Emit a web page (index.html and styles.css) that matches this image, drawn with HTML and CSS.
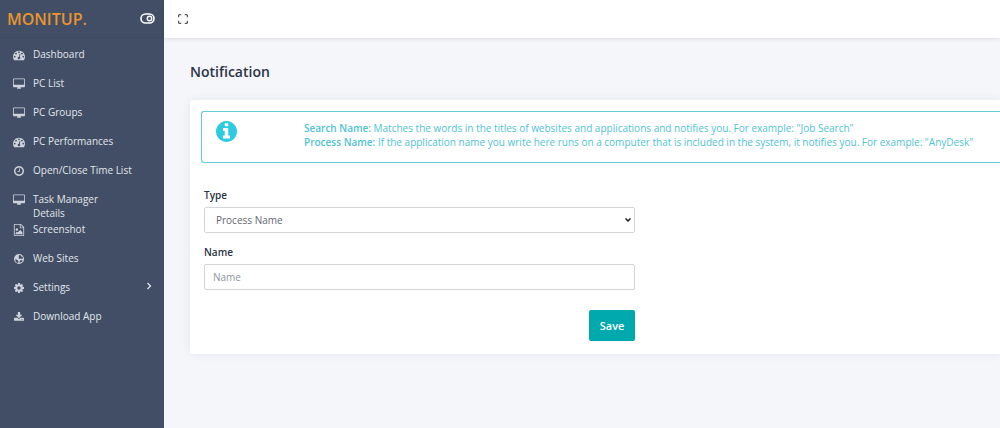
FILE: index.html
```
<!DOCTYPE html>
<html lang="en">
<head>
    <meta charset="UTF-8">
    <meta name="viewport" content="width=device-width, initial-scale=1.0">
    <title>Notification - MONITUP.</title>
    <link rel="stylesheet" href="styles.css">
</head>
<body>
    <!-- Shared icon shapes -->
    <svg class="sprite" aria-hidden="true">
        <symbol id="i-dash" viewBox="0 0 1792 1792"><path d="M384 1152q0-53-37.500-90.500t-90.500-37.500-90.500 37.500-37.500 90.500 37.500 90.500 90.500 37.500 90.500-37.500 37.500-90.500zm192-448q0-53-37.500-90.500t-90.500-37.500-90.500 37.500-37.500 90.500 37.500 90.500 90.500 37.500 90.500-37.500 37.500-90.500zm428 481l101-382q6-26-7.500-48.500t-38.500-29.500-48 6.500-30 39.500l-101 382q-60 5-107 43.500t-63 98.500q-20 77 20 146t117 89 146-20 89-117q16-60-6-117t-72-91zm660-33q0-53-37.500-90.500t-90.500-37.500-90.500 37.500-37.500 90.500 37.500 90.500 90.500 37.500 90.500-37.500 37.500-90.500zm-640-640q0-53-37.500-90.500t-90.500-37.500-90.500 37.500-37.500 90.500 37.500 90.500 90.500 37.500 90.500-37.500 37.500-90.500zm448 192q0-53-37.500-90.500t-90.500-37.500-90.500 37.500-37.500 90.500 37.500 90.500 90.500 37.500 90.500-37.500 37.500-90.500zm320 448q0 261-141 483-19 29-54 29h-1402q-35 0-54-29-141-221-141-483 0-182 71-348t191-286 286-191 348-71 348 71 286 191 191 286 71 348z"/></symbol>
        <symbol id="i-desktop" viewBox="0 0 1920 1792"><path d="M1792 992v-832q0-13-9.500-22.500t-22.500-9.500h-1600q-13 0-22.500 9.500t-9.500 22.500v832q0 13 9.500 22.500t22.500 9.500h1600q13 0 22.500-9.500t9.500-22.500zm128-832v1088q0 66-47 113t-113 47h-544q0 37 16 77.500t32 71 16 43.500q0 26-19 45t-45 19h-512q-26 0-45-19t-19-45q0-14 16-44t32-70 16-78h-544q-66 0-113-47t-47-113v-1088q0-66 47-113t113-47h1600q66 0 113 47t47 113z"/></symbol>
        <symbol id="i-clock" viewBox="128 128 1536 1536"><path d="M1024 544v448q0 14-9 23t-23 9h-320q-14 0-23-9t-9-23v-64q0-14 9-23t23-9h224v-352q0-14 9-23t23-9h64q14 0 23 9t9 23zm416 352q0-148-73-273t-198-198-273-73-273 73-198 198-73 273 73 273 198 198 273 73 273-73 198-198 73-273zm224 0q0 209-103 385.500t-279.500 279.500-385.500 103-385.500-103-279.500-279.500-103-385.500 103-385.500 279.500-279.500 385.500-103 385.500 103 279.500 279.500 103 385.500z"/></symbol>
        <symbol id="i-image" viewBox="0 0 1792 1792"><path d="M1596 380q28 28 48 76t20 88v1152q0 40-28 68t-68 28h-1344q-40 0-68-28t-28-68v-1600q0-40 28-68t68-28h896q40 0 88 20t76 48zm-444-244v376h376q-10-29-22-41l-313-313q-12-12-41-22zm384 1528v-1024h-416q-40 0-68-28t-28-68v-416h-768v1536h1280zm-128-448v320h-1024v-192l192-192 128 128 384-384zm-832-192q-80 0-136-56t-56-136 56-136 136-56 136 56 56 136-56 136-136 56z"/></symbol>
        <symbol id="i-globe" viewBox="2 2 20 20"><path fill-rule="evenodd" d="M12 2a10 10 0 1 0 0 20a10 10 0 0 0 0-20zM13 4l3 1 0 2 3 0 1 3-2 2-3-1-2 1-2-2 1-2-1-2zM4 13l3 0 3 2 1 3-1 2-3-1-2-3zM14 15l4-1 1 2-3 3-3 0z"/></symbol>
        <symbol id="i-cog" viewBox="128 128 1536 1536"><path d="M1152 896q0-106-75-181t-181-75-181 75-75 181 75 181 181 75 181-75 75-181zm512-109v222q0 12-8 23t-20 13l-185 28q-19 54-39 91 35 50 107 138 10 12 10 25t-9 23q-27 37-99 108t-94 71q-12 0-26-9l-138-108q-44 23-91 38-16 136-29 186-7 28-36 28h-222q-14 0-24.500-8.500t-11.500-21.500l-28-184q-49-16-90-37l-141 107q-10 9-25 9-14 0-25-11-126-114-165-168-7-10-7-23 0-12 8-23 15-21 51-66.500t54-70.500q-27-50-41-99l-183-27q-13-2-21-12.500t-8-23.500v-222q0-12 8-23t19-13l186-28q14-46 39-92-40-57-107-138-10-12-10-24 0-10 9-23 26-36 98.500-107.500t94.500-71.500q13 0 26 10l138 107q44-23 91-38 16-136 29-186 7-28 36-28h222q14 0 24.500 8.500t11.500 21.500l28 184q49 16 90 37l142-107q9-9 24-9 13 0 25 10 129 119 165 170 7 8 7 22 0 12-8 23-15 21-51 66.500t-54 70.500q26 50 41 98l183 28q13 2 21 12.500t8 23.500z"/></symbol>
        <symbol id="i-download" viewBox="64 64 1664 1664"><path d="M1344 1344q0-26-19-45t-45-19-45 19-19 45 19 45 45 19 45-19 19-45zm256 0q0-26-19-45t-45-19-45 19-19 45 19 45 45 19 45-19 19-45zm128-224v320q0 40-28 68t-68 28h-1472q-40 0-68-28t-28-68v-320q0-40 28-68t68-28h465l135 136q58 56 136 56t136-56l136-136h464q40 0 68 28t28 68zm-325-569q17 41-14 70l-448 448q-18 19-45 19t-45-19l-448-448q-31-29-14-70 17-39 59-39h256v-448q0-26 19-45t45-19h256q26 0 45 19t19 45v448h256q42 0 59 39z"/></symbol>
        <symbol id="i-info" viewBox="128 128 1536 1536"><path d="M1152 1376v-160q0-14-9-23t-23-9h-96v-512q0-14-9-23t-23-9h-320q-14 0-23 9t-9 23v160q0 14 9 23t23 9h96v320h-96q-14 0-23 9t-9 23v160q0 14 9 23t23 9h448q14 0 23-9t9-23zm-128-896v-160q0-14-9-23t-23-9h-192q-14 0-23 9t-9 23v160q0 14 9 23t23 9h192q14 0 23-9t9-23zm640 416q0 209-103 385.500t-279.500 279.500-385.500 103-385.500-103-279.500-279.500-103-385.500 103-385.500 279.500-279.500 385.500-103 385.500 103 279.500 279.500 103 385.500z"/></symbol>
    </svg>

    <aside class="sidebar">
        <div class="brand">
            <a class="logo" href="#">MONITUP.</a>
            <button class="icon-btn toggle" type="button" aria-label="Toggle menu">
                <svg width="15" height="11" viewBox="0 0 15 11" fill="none" stroke="currentColor">
                    <rect x="1" y="1" width="13" height="9" rx="4.500" stroke-width="1.600"/>
                    <circle cx="9.500" cy="5.500" r="2.200" stroke-width="1.400"/>
                </svg>
            </button>
        </div>
        <nav class="menu">
            <a class="item" href="#"><svg class="icon"><use href="#i-dash"/></svg><span>Dashboard</span></a>
            <a class="item" href="#"><svg class="icon"><use href="#i-desktop"/></svg><span>PC List</span></a>
            <a class="item" href="#"><svg class="icon"><use href="#i-desktop"/></svg><span>PC Groups</span></a>
            <a class="item" href="#"><svg class="icon"><use href="#i-dash"/></svg><span>PC Performances</span></a>
            <a class="item" href="#"><svg class="icon icon-small"><use href="#i-clock"/></svg><span>Open/Close Time List</span></a>
            <a class="item item-tall" href="#"><svg class="icon"><use href="#i-desktop"/></svg><span>Task Manager<br>Details</span></a>
            <a class="item" href="#"><svg class="icon"><use href="#i-image"/></svg><span>Screenshot</span></a>
            <a class="item" href="#"><svg class="icon icon-small"><use href="#i-globe"/></svg><span>Web Sites</span></a>
            <a class="item" href="#"><svg class="icon icon-small"><use href="#i-cog"/></svg><span>Settings</span>
                <svg class="arrow" viewBox="0 0 6 8" fill="none" stroke="currentColor" stroke-width="1.300"><path d="M1.500 1l3 3-3 3"/></svg>
            </a>
            <a class="item" href="#"><svg class="icon icon-small"><use href="#i-download"/></svg><span>Download App</span></a>
        </nav>
    </aside>

    <div class="page">
        <header class="topbar">
            <button class="icon-btn" type="button" aria-label="Full screen">
                <svg width="10" height="10" viewBox="0 0 10 10" fill="none" stroke="currentColor" stroke-width="1.200">
                    <path d="M.6 3.200V1.600q0-1 1-1h1.600M6.800.6h1.600q1 0 1 1v1.600M9.400 6.800v1.600q0 1-1 1H6.800M3.200 9.400H1.600q-1 0-1-1V6.800"/>
                </svg>
            </button>
        </header>

        <main class="content">
            <h1>Notification</h1>
            <section class="card">
                <div class="alert">
                    <svg class="alert-icon"><use href="#i-info"/></svg>
                    <p>
                        <strong>Search Name:</strong> Matches the words in the titles of websites and applications and notifies you. For example: "Job Search"<br>
                        <strong>Process Name:</strong> If the application name you write here runs on a computer that is included in the system, it notifies you. For example: "AnyDesk"
                    </p>
                </div>
                <form class="form">
                    <label for="type">Type</label>
                    <select id="type" class="field">
                        <option>Process Name</option>
                        <option>Search Name</option>
                    </select>
                    <label for="name">Name</label>
                    <input id="name" class="field" type="text" placeholder="Name">
                    <button class="save-btn" type="button">Save</button>
                </form>
            </section>
        </main>
    </div>
</body>
</html>
```

FILE: styles.css
```
* {
    box-sizing: border-box;
}

body {
    margin: 0;
    min-height: 100vh;
    display: flex;
    background: #f5f6fa;
    color: #2b3445;
    font-family: "Open Sans", "Noto Sans", sans-serif;
    font-size: 10px;
    line-height: 14px;
}

a {
    color: inherit;
    text-decoration: none;
}

.sprite {
    position: absolute;
    width: 0;
    height: 0;
}

.icon-btn {
    display: flex;
    padding: 0;
    border: none;
    background: none;
    color: #555;
    cursor: pointer;
}

/* Sidebar */
.sidebar {
    flex: none;
    width: 164px;
    background: #414e66;
    color: #e3e6eb;
}

.brand {
    display: flex;
    align-items: center;
    justify-content: space-between;
    height: 38px;
    padding: 0 9px 0 7px;
    border-bottom: 1px solid #3d4960;
}

.logo {
    color: #e8952f;
    font-size: 16px;
    font-weight: 600;
    line-height: 22px;
}

.toggle {
    color: #fff;
}

.menu {
    padding-top: 8px;
}

.item {
    display: flex;
    align-items: flex-start;
    padding: 1px 12px 14px;
}

.item-tall {
    padding-bottom: 1px;
}

.icon {
    flex: none;
    width: 12px;
    height: 12px;
    margin: 2px 8px 0 1px;
    fill: #cfd3d9;
}

.icon-small {
    height: 10px;
    margin-top: 3px;
}

.arrow {
    width: 6px;
    height: 8px;
    margin: 2px 0 0 auto;
}

/* Page */
.page {
    flex: 1;
    min-width: 0;
}

.topbar {
    display: flex;
    align-items: center;
    height: 38px;
    padding: 0 14px;
    background: #fff;
    box-shadow: 0 1px 4px rgba(0, 0, 0, 0.1);
}

.content {
    padding: 24px 0 24px 26px;
}

h1 {
    margin: 0 0 18px;
    font-size: 14px;
    font-weight: 600;
    line-height: 20px;
}

.card {
    padding: 11px 0 13px 11px;
    background: #fff;
    border-radius: 3px 0 0 3px;
    box-shadow: 0 0 10px rgba(60, 70, 110, 0.08);
}

.alert {
    display: flex;
    align-items: flex-start;
    min-height: 52px;
    padding: 9px 14px;
    border: 1px solid #65cbd8;
    border-right: none;
    border-radius: 3px 0 0 3px;
    color: #4fc3d3;
}

.alert p {
    margin: 0;
}

.alert strong {
    font-weight: 600;
}

.alert-icon {
    flex: none;
    width: 21px;
    height: 21px;
    margin-right: 67px;
    fill: #2ccbe0;
}

/* Form */
.form {
    display: flex;
    flex-direction: column;
    width: 54%;
    margin: 25px 0 0 3px;
}

label {
    margin-bottom: 5px;
    font-weight: 600;
}

.field {
    height: 26px;
    margin-bottom: 12px;
    padding: 0 8px;
    border: 1px solid #d3d5d8;
    border-radius: 2px;
    background: #fff;
    color: #5f6670;
    font: inherit;
}

select.field {
    padding: 0 11px;
    appearance: none;
    background: #fff url("data:image/svg+xml,%3Csvg xmlns='http://www.w3.org/2000/svg' viewBox='0 0 6 4' fill='none' stroke='%23222' stroke-width='1.500'%3E%3Cpath d='M.5.5 3 3 5.500.5'/%3E%3C/svg%3E") no-repeat right 3px center / 6px 4px;
}

.field::placeholder {
    color: #8b94a0;
    opacity: 1;
}

.save-btn {
    align-self: flex-end;
    height: 31px;
    margin-top: 8px;
    padding: 0 11px;
    border: none;
    border-radius: 2px;
    background: #00a9ae;
    color: #fff;
    font: inherit;
    font-size: 11px;
    font-weight: 600;
    cursor: pointer;
}
```
